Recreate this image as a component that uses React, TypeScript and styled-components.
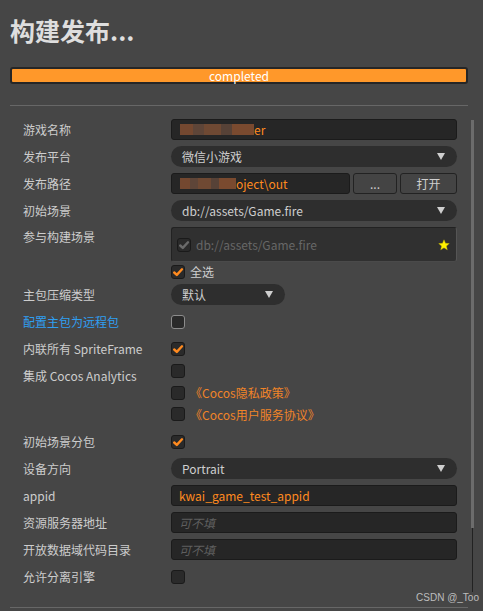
import React from "react";
import styled, { createGlobalStyle } from "styled-components";

const GlobalStyle = createGlobalStyle`
  html, body { margin: 0; padding: 0; background: #464646; overflow: hidden; }
  * { box-sizing: border-box; }
`;

const FONT = `"Noto Sans CJK SC", "Noto Sans", sans-serif`;

const Page = styled.div`
  position: relative;
  width: 483px;
  height: 611px;
  background: #464646;
  padding: 13px 9px 0 10px;
  font-family: ${FONT};
  font-size: 12px;
  color: #cfcfcf;
`;

const Title = styled.h1`
  margin: 0;
  font-size: 25px;
  line-height: 34px;
  font-weight: 700;
  color: #dedede;
  letter-spacing: 0;
`;

const Progress = styled.div`
  margin-top: 20px;
  width: 458px;
  height: 17px;
  border: 2px solid #262626;
  border-radius: 3px;
  background: #ff982a;
  display: flex;
  align-items: center;
  justify-content: center;
  color: #ffffff;
  font-size: 12px;
  line-height: 13px;
`;

const Divider = styled.div`
  margin-top: 21px;
  width: 458px;
  height: 1px;
  background: #676767;
`;

const Body = styled.div`
  display: flex;
  height: 491px;
  overflow: hidden;
`;

const Form = styled.div`
  width: 458px;
  padding: 13px 11px 0 13px;
  display: flex;
  flex-direction: column;
`;

const ScrollCol = styled.div`
  width: 3px;
  margin-left: 3px;
  display: flex;
  flex-direction: column;
  align-items: center;
`;

const Thumb = styled.div`
  margin-top: 14px;
  width: 3px;
  height: 408px;
  background: #6c6c6c;
`;

const Track = styled.div`
  width: 1px;
  height: 64px;
  background: #222;
`;

const Row = styled.div<{ $mt?: number; $h?: number; $top?: boolean }>`
  display: grid;
  grid-template-columns: 148px 286px;
  align-items: ${(p) => (p.$top ? "start" : "center")};
  margin-top: ${(p) => p.$mt ?? 6}px;
  height: ${(p) => p.$h ?? 21}px;
  flex-shrink: 0;
`;

const Label = styled.div<{ $link?: boolean; $mt?: number }>`
  color: ${(p) => (p.$link ? "#2f9ff2" : "#cdcdcd")};
  white-space: nowrap;
  line-height: 21px;
  margin-top: ${(p) => p.$mt ?? 0}px;
`;

const TextBox = styled.div`
  height: 21px;
  background: #262626;
  border: 1px solid #1b1b1b;
  border-radius: 3px;
  padding: 0 7px;
  display: flex;
  align-items: center;
  color: #ff8a1f;
  white-space: nowrap;
  overflow: hidden;
  flex: 1;
  min-width: 0;
`;

const Placeholder = styled.span`
  color: #5f5f5f;
  font-style: italic;
`;

const Redacted = styled.span<{ $w: number }>`
  display: inline-block;
  width: ${(p) => p.$w}px;
  height: 11px;
  margin-left: 1px;
  background: linear-gradient(
    90deg,
    #744830 0 18%,
    #5e4538 18% 32%,
    #6f4933 32% 55%,
    #574237 55% 70%,
    #7a4a2f 70% 100%
  );
  filter: blur(0.6px);
`;

const Select = styled.div<{ $w?: number }>`
  height: 21px;
  width: ${(p) => (p.$w ? `${p.$w}px` : "100%")};
  background: #2e2e2e;
  border-radius: 11px;
  padding: 0 12px 0 11px;
  display: flex;
  align-items: center;
  justify-content: space-between;
  color: #cfcfcf;
`;

const Arrow = styled.span`
  width: 0;
  height: 0;
  border-left: 4.5px solid transparent;
  border-right: 4.5px solid transparent;
  border-top: 7px solid #cfcfcf;
`;

const Controls = styled.div`
  display: flex;
  gap: 3px;
  height: 21px;
`;

const Button = styled.div<{ $w: number }>`
  width: ${(p) => p.$w}px;
  flex-shrink: 0;
  height: 21px;
  background: #444;
  border: 1px solid #222;
  border-radius: 3px;
  display: flex;
  align-items: center;
  justify-content: center;
  color: #cfcfcf;
`;

const SceneBox = styled.div`
  height: 35px;
  background: #303030;
  border: 1px solid #222;
  border-right-color: #555;
  border-bottom-color: #4a4a4a;
  border-radius: 3px;
  padding: 0 6px 0 5px;
  display: flex;
  align-items: center;
  gap: 5px;
`;

const SceneName = styled.span`
  color: #676767;
  flex: 1;
`;

const Box = styled.div<{ $focus?: boolean }>`
  width: 14px;
  height: 14px;
  flex-shrink: 0;
  background: #2a2a2a;
  border: 1px solid ${(p) => (p.$focus ? "#8c8c8c" : "#1a1a1a")};
  border-radius: 3px;
  display: flex;
  align-items: center;
  justify-content: center;
`;

const Item = styled.div`
  display: flex;
  align-items: center;
  gap: 5px;
  height: 14px;
  white-space: nowrap;
`;

const Stack = styled.div`
  display: flex;
  flex-direction: column;
  gap: 7.5px;
`;

const Orange = styled.span`
  color: #f08428;
`;

const Watermark = styled.div`
  position: absolute;
  right: 4px;
  top: 591px;
  font-family: "Liberation Sans", Arial, sans-serif;
  font-size: 10px;
  color: #bdbdbd;
  line-height: 13px;
`;

const BottomLine = styled.div`
  margin-top: 10px;
  width: 458px;
  height: 1px;
  background: #676767;
`;

const Check = ({ color = "#ff8a1f" }: { color?: string }) => (
  <svg width="12" height="12" viewBox="0 0 12 12">
    <path d="M2.2 6.5 L4.8 8.9 L10 3.3" fill="none" stroke={color} strokeWidth="2.4" strokeLinecap="round" strokeLinejoin="round" />
  </svg>
);

const CheckBox = ({ checked, focus, color }: { checked?: boolean; focus?: boolean; color?: string }) => (
  <Box $focus={focus}>{checked && <Check color={color} />}</Box>
);

const Star = () => (
  <svg width="12" height="12" viewBox="0 0 24 24">
    <polygon points="12,1.5 15,8.6 22.6,9.2 16.8,14.2 18.6,21.7 12,17.7 5.4,21.7 7.2,14.2 1.4,9.2 9,8.6" fill="#fff200" stroke="#c9b800" strokeWidth="0.8" />
  </svg>
);

export default function App() {
  return (
    <>
      <GlobalStyle />
      <Page>
        <Title>构建发布...</Title>
        <Progress>completed</Progress>
        <Divider />
        <Body>
          <Form>
            <Row $mt={0}>
              <Label>游戏名称</Label>
              <TextBox>
                <Redacted $w={74} />
                <span>er</span>
              </TextBox>
            </Row>
            <Row>
              <Label>发布平台</Label>
              <Select>
                <span>微信小游戏</span>
                <Arrow />
              </Select>
            </Row>
            <Row>
              <Label>发布路径</Label>
              <Controls>
                <TextBox>
                  <Redacted $w={56} />
                  <span>oject\out</span>
                </TextBox>
                <Button $w={44}>...</Button>
                <Button $w={57}>打开</Button>
              </Controls>
            </Row>
            <Row>
              <Label>初始场景</Label>
              <Select>
                <span>db://assets/Game.fire</span>
                <Arrow />
              </Select>
            </Row>
            <Row $h={35} $top>
              <Label $mt={-1}>参与构建场景</Label>
              <SceneBox>
                <CheckBox checked color="#6a6a6a" />
                <SceneName>db://assets/Game.fire</SceneName>
                <Star />
              </SceneBox>
            </Row>
            <Row $mt={1} $h={17}>
              <span />
              <Item>
                <CheckBox checked />
                <span>全选</span>
              </Item>
            </Row>
            <Row $mt={4}>
              <Label>主包压缩类型</Label>
              <Select $w={114}>
                <span>默认</span>
                <Arrow />
              </Select>
            </Row>
            <Row>
              <Label $link>配置主包为远程包</Label>
              <Item>
                <CheckBox focus />
              </Item>
            </Row>
            <Row>
              <Label>内联所有 SpriteFrame</Label>
              <Item>
                <CheckBox checked />
              </Item>
            </Row>
            <Row $mt={5} $h={57} $top>
              <Label $mt={1}>集成 Cocos Analytics</Label>
              <Stack>
                <Item>
                  <CheckBox />
                </Item>
                <Item>
                  <CheckBox />
                  <Orange>《Cocos隐私政策》</Orange>
                </Item>
                <Item>
                  <CheckBox />
                  <Orange>《Cocos用户服务协议》</Orange>
                </Item>
              </Stack>
            </Row>
            <Row $mt={10}>
              <Label>初始场景分包</Label>
              <Item>
                <CheckBox checked />
              </Item>
            </Row>
            <Row>
              <Label>设备方向</Label>
              <Select>
                <span>Portrait</span>
                <Arrow />
              </Select>
            </Row>
            <Row>
              <Label>appid</Label>
              <TextBox>kwai_game_test_appid</TextBox>
            </Row>
            <Row>
              <Label>资源服务器地址</Label>
              <TextBox>
                <Placeholder>可不填</Placeholder>
              </TextBox>
            </Row>
            <Row>
              <Label>开放数据域代码目录</Label>
              <TextBox>
                <Placeholder>可不填</Placeholder>
              </TextBox>
            </Row>
            <Row>
              <Label>允许分离引擎</Label>
              <Item>
                <CheckBox />
              </Item>
            </Row>
            <Row>
              <span />
              <Item>
                <CheckBox />
              </Item>
            </Row>
          </Form>
          <ScrollCol>
            <Thumb />
            <Track />
          </ScrollCol>
        </Body>
        <BottomLine />
        <Watermark>CSDN @_Too</Watermark>
      </Page>
    </>
  );
}
